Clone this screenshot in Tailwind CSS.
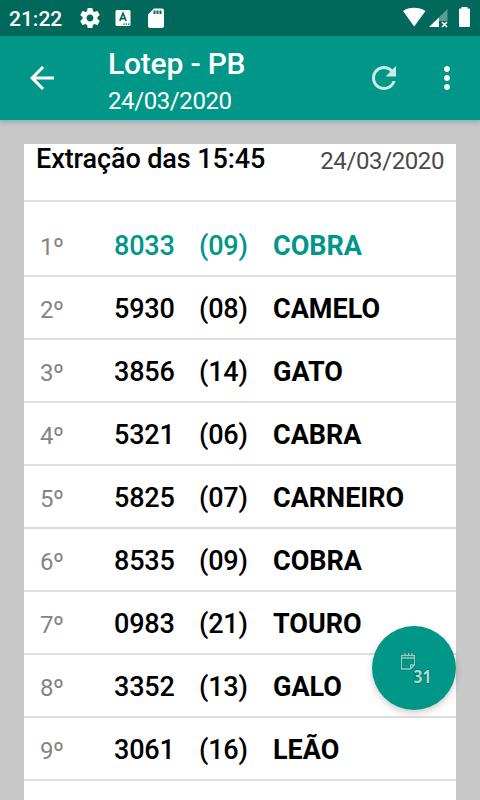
<!DOCTYPE html>
<html lang="pt-BR">
    <head>
        <meta charset="utf-8">
        <title>Lotep - PB</title>
        <script src="https://cdn.jsdelivr.net/npm/@tailwindcss/browser@4"></script>
    </head>

    <body class="relative w-[480px] h-[800px] overflow-hidden bg-[#c8c8c8] font-['Roboto',sans-serif] flex flex-col">
        <!-- Status bar -->
        <div class="h-9 shrink-0 bg-[#00695c] flex items-center text-white pl-[9px] pr-[9px]">
            <p class="w-[69px] pt-0.5 text-[21px] leading-[34px] font-medium">21:22</p>
            <svg class="w-6 h-6" viewBox="0 0 24 24" fill="currentColor"><path d="M19.43 12.98c.04-.32.07-.64.07-.98s-.03-.66-.07-.98l2.11-1.65c.19-.15.24-.42.12-.64l-2-3.46c-.12-.22-.39-.3-.61-.22l-2.49 1c-.52-.4-1.08-.73-1.69-.98l-.38-2.65C14.46 2.18 14.25 2 14 2h-4c-.25 0-.46.18-.49.42l-.38 2.65c-.61.25-1.17.59-1.69.98l-2.49-1c-.23-.09-.49 0-.61.22l-2 3.46c-.13.22-.07.49.12.64l2.11 1.65c-.04.32-.07.65-.07.98s.03.66.07.98l-2.11 1.65c-.19.15-.24.42-.12.64l2 3.46c.12.22.39.3.61.22l2.49-1c.52.4 1.08.73 1.69.98l.38 2.65c.03.24.24.42.49.42h4c.25 0 .46-.18.49-.42l.38-2.65c.61-.25 1.17-.59 1.69-.98l2.49 1c.23.09.49 0 .61-.22l2-3.46c.12-.22.07-.49-.12-.64l-2.11-1.65zM12 15.5c-1.93 0-3.500-1.570-3.500-3.500s1.570-3.500 3.500-3.500 3.500 1.570 3.500 3.500-1.570 3.500-3.500 3.500z"/></svg>
            <svg class="w-4 h-4 ml-[13px]" viewBox="0 0 16 16"><rect x="0.500" width="15" height="16" rx="1.500" fill="#fff"/><path d="M4.800 11 L8 3.200 L11.200 11 M6 8.600 H10" fill="none" stroke="#00695c" stroke-width="1.600"/><path d="M8.300 13.500h1.400v1.200H8.300zM10.700 13.500h1.400v1.200h-1.400zM13 13.500h1.400v1.200H13z" fill="#00695c"/></svg>
            <svg class="w-6 h-6 ml-[13px]" viewBox="0 0 24 24" fill="currentColor"><path d="M18 2.500h-8L4 8.500V20c0 1.100.9 2 2 2h12c1.100 0 2-.9 2-2V4.500c0-1.100-.9-2-2-2zM11.500 8h-2V4.500h2V8zm3 0h-2V4.500h2V8zm3 0h-2V4.500h2V8z"/></svg>
            <svg class="w-[68px] h-6 ml-auto" viewBox="0 0 68 24">
                <path d="M0 5C6 .8 16 .8 22.500 5L11.200 20.500z" fill="#fff"/>
                <path d="M44.500 3v12H36v6H26z" fill="#fff" opacity=".35"/>
                <path d="M36 11.500V21H26z" fill="#fff"/>
                <path d="M39 16l5 5M44 16l-5 5" stroke="#fff" stroke-width="1.700"/>
                <path d="M58.500 2.500V1h6v1.500h1.500q1 0 1 1V20q0 1-1 1h-9q-1 0-1-1V3.500q0-1 1-1z" fill="#fff"/>
            </svg>
        </div>

        <!-- App bar -->
        <div class="relative h-[84px] shrink-0 bg-[#009688] shadow-[0_1px_1px_#7fc4c4,0_2px_5px_rgba(0,0,0,0.2)] flex items-center text-white">
            <svg class="w-9 h-9 ml-6" viewBox="0 0 24 24" fill="currentColor"><path d="M20 11H7.830l5.590-5.590L12 4l-8 8 8 8 1.410-1.410L7.830 13H20v-2z"/></svg>
            <div class="ml-12 pt-1 flex-col">
                <p class="text-[30px] leading-[35px] tracking-[-0.2px] font-medium">Lotep - PB</p>
                <p class="text-[24px] leading-7 mt-1.5 tracking-[-0.4px]">24/03/2020</p>
            </div>
            <svg class="w-9 h-9 ml-auto mr-[27px] text-white/80" viewBox="0 0 24 24" fill="currentColor"><path d="M17.650 6.350C16.200 4.900 14.210 4 12 4c-4.420 0-7.990 3.580-7.990 8s3.570 8 7.990 8c3.730 0 6.840-2.550 7.730-6h-2.080c-.82 2.330-3.040 4-5.650 4-3.310 0-6-2.690-6-6s2.690-6 6-6c1.660 0 3.140.69 4.220 1.780L13 11h7V4l-2.350 2.350z"/></svg>
            <svg class="w-9 h-9 mr-[15px]" viewBox="0 0 24 24" fill="currentColor"><path d="M12 8c1.100 0 2-.9 2-2s-.9-2-2-2-2 .9-2 2 .9 2 2 2zm0 2c-1.100 0-2 .9-2 2s.9 2 2 2 2-.9 2-2-.9-2-2-2zm0 6c-1.100 0-2 .9-2 2s.9 2 2 2 2-.9 2-2-.9-2-2-2z"/></svg>
        </div>

        <!-- Results card -->
        <div class="mx-6 mt-6 grow bg-white text-black">
            <div class="h-[58px] border-b-2 border-[#dedede] flex justify-between pl-3 pr-3">
                <p class="text-[27px] leading-[30px] tracking-[-0.1px] font-medium">Extração das 15:45</p>
                <p class="text-[24px] leading-[34px] tracking-[-0.4px] text-[#4a4a4a]">24/03/2020</p>
            </div>
            <div id="results" class="pt-3"></div>
        </div>

        <!-- Calendar button -->
        <button class="absolute left-[372px] top-[626px] w-[84px] h-[84px] rounded-full bg-[#009688] shadow-[0_3px_7px_rgba(0,0,0,0.2)]">
            <svg class="w-[84px] h-[84px]" viewBox="0 0 84 84">
                <path d="M29.500 29.500h13v9.500l-4 4h-9zM29.500 32h13M42.500 39h-4v4M33 27v3M36.500 27v3M40 27v3" fill="none" stroke="#007a6f" stroke-width="2.800"/>
                <path d="M29.500 29.500h13v9.500l-4 4h-9zM29.500 32h13M42.500 39h-4v4M33 27v3M36.500 27v3M40 27v3" fill="none" stroke="#8ed0ca" stroke-width="1.300"/>
                <text x="41.500" y="57" font-family="Open Sans, sans-serif" font-size="17.500" font-weight="700" textLength="18" lengthAdjust="spacingAndGlyphs" fill="#a5dad5" stroke="#00695f" stroke-width="1.200" paint-order="stroke">31</text>
            </svg>
        </button>

        <script>
            const results = [
                ['1º', '8033', '(09)', 'COBRA'],
                ['2º', '5930', '(08)', 'CAMELO'],
                ['3º', '3856', '(14)', 'GATO'],
                ['4º', '5321', '(06)', 'CABRA'],
                ['5º', '5825', '(07)', 'CARNEIRO'],
                ['6º', '8535', '(09)', 'COBRA'],
                ['7º', '0983', '(21)', 'TOURO'],
                ['8º', '3352', '(13)', 'GALO'],
                ['9º', '3061', '(16)', 'LEÃO']
            ];
            const list = document.getElementById('results');

            results.forEach((row, i) => {
                // The first prize is highlighted
                const color = i === 0 ? 'text-[#009688]' : 'text-black';
                list.innerHTML += '<div class="h-[63px] border-b-2 border-[#dedede] flex items-center pl-4 text-[27px] ' + color + '">' +
                    '<p class="w-[74px] pt-[5px] text-[24px] tracking-[-0.5px] text-[#848484]">' + row[0] + '</p>' +
                    '<p class="w-[85px] pt-1 tracking-[-0.2px] font-medium">' + row[1] + '</p>' +
                    '<p class="w-[74px] pt-1 tracking-[-0.2px] font-medium">' + row[2] + '</p>' +
                    '<p class="pt-1 font-bold">' + row[3] + '</p>' +
                    '</div>';
            });
        </script>
    </body>
</html>
